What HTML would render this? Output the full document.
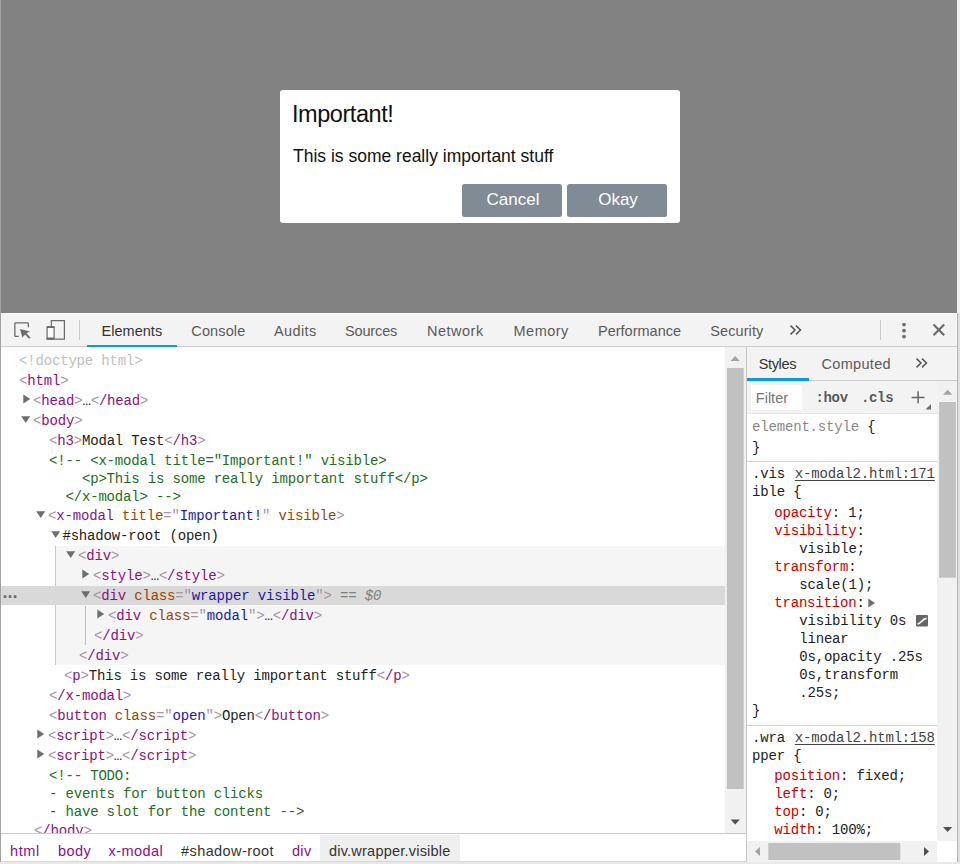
<!DOCTYPE html>
<html lang="en">
<head>
<meta charset="utf-8">
<title>Modal Test</title>
<style>
*{box-sizing:border-box;margin:0;padding:0}
html,body{width:960px;height:864px;overflow:hidden;background:#fff}
body{position:relative;font-family:"Liberation Sans",Arial,sans-serif;color:#222}
.abs{position:absolute}
/* window edges */
#edgeL{left:0;top:0;width:1px;height:864px;background:#a2a2a2}
#edgeR{left:957px;top:0;width:3px;height:864px;background:#f1f1f0}
#edgeR2{left:957px;top:313px;width:3px;height:551px;background:#dfdfdf;border-left:1px solid #b6b6b6}
#edgeB{left:0;top:862px;width:960px;height:2px;background:#e9e9e9}
/* page */
#page{left:1px;top:0;width:956px;height:312.6px;background:#828282}
#modal{left:280px;top:90.4px;width:400px;height:133px;background:#fff;border-radius:3px}
#modal h1{position:absolute;left:12px;top:9.6px;font-size:23.5px;letter-spacing:-0.45px;font-weight:normal;line-height:28px;color:#111;white-space:nowrap}
#modal p{position:absolute;left:13px;top:54.6px;font-size:17.5px;line-height:22px;color:#111;white-space:nowrap}
.btn{position:absolute;top:93.8px;width:100px;height:33px;background:#808b96;border-radius:2.5px;color:#fff;font-size:17px;line-height:31.6px;padding-left:2px;text-align:center}
/* devtools toolbar */
#tb{left:1px;top:313px;width:956px;height:34px;background:#f3f3f3;border-bottom:1px solid #cdcdcd;border-top:1px solid #fafafa}
.ui{font-family:"Liberation Sans",Arial,sans-serif;font-size:14.5px;color:#5a5a5a;white-space:nowrap;line-height:20px}
.tab{position:absolute;top:321px;height:20px}
.sel{color:#333}
.uline{background:#0a99e8;height:2.4px}
/* panes */
#tree{left:1px;top:347px;width:724.3px;height:486px;background:#fff;overflow:hidden}
#sbar1{left:725.3px;top:347px;width:20.7px;height:486px;background:#f1f1f1}
#split{left:746px;top:347px;width:1px;height:515px;background:#c6c6c6}
#crumbs{left:1px;top:833px;width:745px;height:29px;background:#fff;border-top:1px solid #ccc;border-bottom:1px solid #d8d8d8}
#stabs{left:747px;top:347px;width:210px;height:34px;background:#f3f3f3;border-bottom:1px solid #cdcdcd}
#sfilter{left:747px;top:381px;width:190px;height:33px;background:#f3f3f3;border-bottom:1px solid #e6e6e6}
#styles{left:747px;top:414px;width:190px;height:427px;background:#fff;overflow:hidden}
#sbar2{left:937px;top:381px;width:20px;height:460px;background:#f1f1f1}
#hbar{left:747px;top:841px;width:190px;height:21px;background:#f1f1f1}
.mono{font-family:"Liberation Mono","DejaVu Sans Mono",monospace;font-size:14px;letter-spacing:-0.17px;white-space:pre}

/* tree */
#tree{padding-top:3px}
.r{height:20px;line-height:20px;padding-top:1px;position:relative;color:#222}
.r.c3{height:55px;line-height:18px;padding-top:2px}
.i0{padding-left:18px}.i1{padding-left:33px}.i2{padding-left:48px}.i3{padding-left:63px}.i4{padding-left:78px}.i5{padding-left:93px}.i6{padding-left:108px}
.t{color:#881280}.b{color:#a894a6}.an{color:#994500}.av{color:#1a1aa6}.cm{color:#236e25}.dt{color:#c0c0c0}.tx{color:#222}
.tri{position:absolute;top:0;left:0;overflow:visible}
.r.ht{text-indent:-1px}
#band{left:54px;top:199px;width:671px;height:119px;background:#f5f5f5;border-left:1px solid #c9c9c9}
#selrow{left:0;top:239px;width:725px;height:18.5px;background:#d9d9d9}
#guide{left:84px;top:259px;width:1px;height:39px;background:#a9c4ea}

/* styles pane */
.sl{position:absolute;height:18px;line-height:18px;color:#222}
.pn{color:#c80000}
.lnk{color:#444;text-decoration:underline;text-underline-offset:1.5px;margin-left:1.7px}
.sep{position:absolute;left:0;width:191px;height:1px;background:#d4d4d4}
.crumb{position:absolute;top:6.5px;height:20px;line-height:20px;font-size:14.5px;white-space:nowrap;color:#881280}
</style>
</head>
<body>
<div id="page" class="abs"></div>
<div id="modal" class="abs">
  <h1>Important!</h1>
  <p>This is some really important stuff</p>
  <div class="btn" style="left:182px">Cancel</div>
  <div class="btn" style="left:287px">Okay</div>
</div>

<div id="tb" class="abs"></div>
<!-- toolbar icons -->
<svg class="abs" style="left:12px;top:319px" width="22" height="22" viewBox="0 0 22 22" fill="none">
  <path d="M6.7 17.35 H3.55 Q2.85 17.35 2.85 16.65 V4.65 Q2.85 3.95 3.55 3.95 H15.65 Q16.35 3.95 16.35 4.65 V8.3" stroke="#6b6b6b" stroke-width="1.3"/>
  <path d="M8 10 L18 12.4 L14.4 14.3 L18.5 18.4 L17.1 19.7 L13 15.6 L10.4 18.5 Z" fill="#6b6b6b"/>
</svg>
<svg class="abs" style="left:44px;top:318px" width="24" height="24" viewBox="0 0 24 24" fill="none">
  <path d="M7.3 8.2 V2.6 H20.4 V21.1 H10.7" stroke="#6b6b6b" stroke-width="1.2"/>
  <rect x="3.1" y="8.8" width="7" height="12.4" rx="0.8" fill="#fbfbfb" stroke="#6b6b6b" stroke-width="1.2"/>
  <rect x="2.5" y="8.2" width="8.2" height="1.9" rx="0.6" fill="#6b6b6b"/>
  <rect x="2.5" y="19.4" width="8.2" height="2.4" rx="0.6" fill="#6b6b6b"/>
</svg>
<div class="abs" style="left:79px;top:320px;width:1px;height:20px;background:#cacaca"></div>
<div class="abs ui tab sel" style="left:101.5px;letter-spacing:0.03px">Elements</div>
<div class="abs uline" style="left:87px;top:344.6px;width:90px"></div>
<div class="abs ui tab" style="left:191.3px;letter-spacing:0.13px">Console</div>
<div class="abs ui tab" style="left:274px;letter-spacing:0.4px">Audits</div>
<div class="abs ui tab" style="left:345px;letter-spacing:-0.15px">Sources</div>
<div class="abs ui tab" style="left:427px;letter-spacing:0.5px">Network</div>
<div class="abs ui tab" style="left:513.5px;letter-spacing:0.5px">Memory</div>
<div class="abs ui tab" style="left:598px;letter-spacing:0px">Performance</div>
<div class="abs ui tab" style="left:710.3px;letter-spacing:0.08px">Security</div>
<svg class="abs" style="left:788px;top:322px" width="16" height="16" viewBox="0 0 16 16" fill="none" stroke="#555" stroke-width="1.5"><path d="M2.5 3.6 L7 8 L2.5 12.4 M8 3.6 L12.5 8 L8 12.4"/></svg>
<div class="abs" style="left:880px;top:320px;width:1px;height:20px;background:#cacaca"></div>
<svg class="abs" style="left:898px;top:320px" width="12" height="20" viewBox="0 0 12 20" fill="#6e6e6e"><circle cx="6" cy="4.6" r="1.9"/><circle cx="6" cy="10.6" r="1.9"/><circle cx="6" cy="16.6" r="1.9"/></svg>
<svg class="abs" style="left:930px;top:321px" width="18" height="18" viewBox="0 0 18 18" fill="none" stroke="#6a6a6a" stroke-width="2.1"><path d="M3.5 3.6 L14.2 14.2 M14.2 3.6 L3.5 14.2"/></svg>
<div id="tree" class="abs">
<div id="band" class="abs"></div>
<div id="selrow" class="abs"></div>
<div id="guide" class="abs"></div>
<div class="abs" style="left:1.6px;top:235px;height:20px;line-height:20px;font-size:18px;color:#6c6c6c;font-weight:bold">...</div>
<div class="r mono i0"><span class="dt">&lt;!doctype html&gt;</span></div>
<div class="r mono i0"><span class="b">&lt;</span><span class="t">html</span><span class="b">&gt;</span></div>
<div class="r ht mono i1"><svg class="tri" style="left:21.5px;top:4px" width="8" height="10" viewBox="0 0 8 10"><path d="M0.3 0.4 L7.2 4.9 L0.3 9.4 Z" fill="#6e6e6e"/></svg><span class="b">&lt;</span><span class="t">head</span><span class="b">&gt;</span>…<span class="b">&lt;</span><span class="t">/head</span><span class="b">&gt;</span></div>
<div class="r ht mono i1"><svg class="tri" style="left:20px;top:6px" width="10" height="8" viewBox="0 0 10 8"><path d="M0.2 0.2 H9.2 L4.7 6.9 Z" fill="#6e6e6e"/></svg><span class="b">&lt;</span><span class="t">body</span><span class="b">&gt;</span></div>
<div class="r mono i2"><span class="b">&lt;</span><span class="t">h3</span><span class="b">&gt;</span><span class="tx">Modal Test</span><span class="b">&lt;</span><span class="t">/h3</span><span class="b">&gt;</span></div>
<div class="r mono i2 c3"><span class="cm">&lt;!-- &lt;x-modal title="Important!" visible&gt;
    &lt;p&gt;This is some really important stuff&lt;/p&gt;
  &lt;/x-modal&gt; --&gt;</span></div>
<div class="r ht mono i2"><svg class="tri" style="left:35px;top:6px" width="10" height="8" viewBox="0 0 10 8"><path d="M0.2 0.2 H9.2 L4.7 6.9 Z" fill="#6e6e6e"/></svg><span class="b">&lt;</span><span class="t">x-modal</span> <span class="an">title</span><span class="b">=&quot;</span><span class="av">Important!</span><span class="b">&quot;</span> <span class="an">visible</span><span class="b">&gt;</span></div>
<div class="r ht mono i3"><svg class="tri" style="left:49.5px;top:6px" width="10" height="8" viewBox="0 0 10 8"><path d="M0.2 0.2 H9.2 L4.7 6.9 Z" fill="#6e6e6e"/></svg><span class="tx" style="margin-left:-0.6px">#shadow-root (open)</span></div>
<div class="r ht mono i4"><svg class="tri" style="left:65px;top:6px" width="10" height="8" viewBox="0 0 10 8"><path d="M0.2 0.2 H9.2 L4.7 6.9 Z" fill="#6e6e6e"/></svg><span class="b">&lt;</span><span class="t">div</span><span class="b">&gt;</span></div>
<div class="r ht mono i5"><svg class="tri" style="left:81.3px;top:4px" width="8" height="10" viewBox="0 0 8 10"><path d="M0.3 0.4 L7.2 4.9 L0.3 9.4 Z" fill="#6e6e6e"/></svg><span class="b">&lt;</span><span class="t">style</span><span class="b">&gt;</span>…<span class="b">&lt;</span><span class="t">/style</span><span class="b">&gt;</span></div>
<div class="r ht mono i5"><svg class="tri" style="left:80px;top:6px" width="10" height="8" viewBox="0 0 10 8"><path d="M0.2 0.2 H9.2 L4.7 6.9 Z" fill="#6e6e6e"/></svg><span class="b">&lt;</span><span class="t">div</span> <span class="an">class</span><span class="b">=&quot;</span><span class="av">wrapper visible</span><span class="b">&quot;</span><span class="b">&gt;</span><span style="color:#808080;font-style:italic"> == $0</span></div>
<div class="r ht mono i6"><svg class="tri" style="left:96px;top:4px" width="8" height="10" viewBox="0 0 8 10"><path d="M0.3 0.4 L7.2 4.9 L0.3 9.4 Z" fill="#6e6e6e"/></svg><span class="b">&lt;</span><span class="t">div</span> <span class="an">class</span><span class="b">=&quot;</span><span class="av">modal</span><span class="b">&quot;</span><span class="b">&gt;</span>…<span class="b">&lt;</span><span class="t">/div</span><span class="b">&gt;</span></div>
<div class="r mono i5"><span class="b">&lt;</span><span class="t">/div</span><span class="b">&gt;</span></div>
<div class="r mono i4"><span class="b">&lt;</span><span class="t">/div</span><span class="b">&gt;</span></div>
<div class="r mono i3"><span class="b">&lt;</span><span class="t">p</span><span class="b">&gt;</span><span class="tx">This is some really important stuff</span><span class="b">&lt;</span><span class="t">/p</span><span class="b">&gt;</span></div>
<div class="r mono i2"><span class="b">&lt;</span><span class="t">/x-modal</span><span class="b">&gt;</span></div>
<div class="r mono i2"><span class="b">&lt;</span><span class="t">button</span> <span class="an">class</span><span class="b">=&quot;</span><span class="av">open</span><span class="b">&quot;</span><span class="b">&gt;</span><span class="tx">Open</span><span class="b">&lt;</span><span class="t">/button</span><span class="b">&gt;</span></div>
<div class="r ht mono i2"><svg class="tri" style="left:35.8px;top:4px" width="8" height="10" viewBox="0 0 8 10"><path d="M0.3 0.4 L7.2 4.9 L0.3 9.4 Z" fill="#6e6e6e"/></svg><span class="b">&lt;</span><span class="t">script</span><span class="b">&gt;</span>…<span class="b">&lt;</span><span class="t">/script</span><span class="b">&gt;</span></div>
<div class="r ht mono i2"><svg class="tri" style="left:35.8px;top:4px" width="8" height="10" viewBox="0 0 8 10"><path d="M0.3 0.4 L7.2 4.9 L0.3 9.4 Z" fill="#6e6e6e"/></svg><span class="b">&lt;</span><span class="t">script</span><span class="b">&gt;</span>…<span class="b">&lt;</span><span class="t">/script</span><span class="b">&gt;</span></div>
<div class="r mono i2 c3"><span class="cm">&lt;!-- TODO:
- events for button clicks
- have slot for the content --&gt;</span></div>
<div class="r mono i1"><span class="b">&lt;</span><span class="t">/body</span><span class="b">&gt;</span></div>
</div>
<div id="sbar1" class="abs">
<svg class="abs" style="left:0;top:0" width="21" height="486" viewBox="0 0 21 486"><path d="M5.6 14 L10.2 9 L14.8 14 Z" fill="#a3a3a3"/><rect x="1.9" y="21" width="16.8" height="421" fill="#c1c1c1"/><path d="M5.6 472.5 L10.2 477.5 L14.8 472.5 Z" fill="#505050"/></svg>
</div>
<div id="split" class="abs"></div>
<div id="crumbs" class="abs">
<div class="abs" style="left:319px;top:1px;width:140px;height:26px;background:#efefef"></div>
<div class="crumb" style="left:9px;letter-spacing:0.6px">html</div>
<div class="crumb" style="left:57px;letter-spacing:0.45px">body</div>
<div class="crumb" style="left:107.5px;letter-spacing:0.45px">x-modal</div>
<div class="crumb" style="left:180px;letter-spacing:0.42px;color:#333">#shadow-root</div>
<div class="crumb" style="left:291px;letter-spacing:0.3px">div</div>
<div class="crumb" style="left:328px;letter-spacing:0.22px;color:#333">div.wrapper.visible</div>
</div>
<div id="stabs" class="abs">
<div class="abs ui sel" style="left:11.7px;top:7px;letter-spacing:-0.35px">Styles</div>
<div class="abs uline" style="left:0;top:31px;width:62px;height:2.8px"></div>
<div class="abs ui" style="left:74.6px;top:7px;letter-spacing:0.3px">Computed</div>
<svg class="abs" style="left:167px;top:8px" width="16" height="16" viewBox="0 0 16 16" fill="none" stroke="#555" stroke-width="1.5"><path d="M2.5 3.6 L7 8 L2.5 12.4 M8 3.6 L12.5 8 L8 12.4"/></svg>
</div>
<div id="sfilter" class="abs">
<div class="abs" style="left:4px;top:4px;width:51px;height:25px;background:#fff"></div>
<div class="abs ui" style="left:8.8px;top:6.5px;color:#757575">Filter</div>
<div class="abs mono" style="left:68.5px;top:8.3px;line-height:18px;font-weight:bold;color:#5a5a5a;font-size:14px;letter-spacing:-0.35px">:hov</div>
<div class="abs mono" style="left:114px;top:8.3px;line-height:18px;font-weight:bold;color:#5a5a5a;font-size:14px;letter-spacing:-0.35px">.cls</div>
<svg class="abs" style="left:162px;top:8px" width="24" height="24" viewBox="0 0 24 24"><path d="M2.7 8.4 H15.5 M9.1 2.3 V14.2" stroke="#666" stroke-width="1.5" fill="none"/><path d="M22 15 V20.5 H16.5 Z" fill="#6e6e6e"/></svg>
</div>
<div id="styles" class="abs">
<div class="sl mono" style="left:5px;top:4px"><span style="color:#888">element.style</span> {</div>
<div class="sl mono" style="left:5px;top:24.5px">}</div>
<div class="sep" style="top:47px"></div>
<div class="sl mono" style="left:5px;top:51px">.vis <span class="lnk">x-modal2.html:171</span></div>
<div class="sl mono" style="left:5px;top:69px">ible {</div>
<div class="sl mono" style="left:27.2px;top:90px"><span class="pn">opacity</span>: 1;</div>
<div class="sl mono" style="left:27.2px;top:108px"><span class="pn">visibility</span>:</div>
<div class="sl mono" style="left:52.2px;top:126px">visible;</div>
<div class="sl mono" style="left:27.2px;top:144px"><span class="pn">transform</span>:</div>
<div class="sl mono" style="left:52.2px;top:162px">scale(1);</div>
<div class="sl mono" style="left:27.2px;top:180px"><span class="pn">transition</span>:<svg width="8" height="10" viewBox="0 0 8 10" style="margin-left:3px;vertical-align:-1px"><path d="M0.3 0.4 L7 4.9 L0.3 9.4 Z" fill="#6e6e6e"/></svg></div>
<div class="sl mono" style="left:52.2px;top:198px">visibility 0s</div>
<svg class="abs" style="left:169.3px;top:200.5px" width="13" height="13" viewBox="0 0 13 13"><rect width="12" height="11.6" rx="1" fill="#666"/><path d="M1.6 8.8 C5.6 8.8 6 3.4 10.6 3.4" stroke="#fff" stroke-width="1.7" fill="none"/></svg>
<div class="sl mono" style="left:52.2px;top:216px">linear</div>
<div class="sl mono" style="left:52.2px;top:234px">0s,opacity .25s</div>
<div class="sl mono" style="left:52.2px;top:252px">0s,transform</div>
<div class="sl mono" style="left:52.2px;top:270px">.25s;</div>
<div class="sl mono" style="left:5px;top:288px">}</div>
<div class="sep" style="top:311px"></div>
<div class="sl mono" style="left:5px;top:315px">.wra <span class="lnk">x-modal2.html:158</span></div>
<div class="sl mono" style="left:5px;top:333px">pper {</div>
<div class="sl mono" style="left:27.2px;top:353px"><span class="pn">position</span>: fixed;</div>
<div class="sl mono" style="left:27.2px;top:371px"><span class="pn">left</span>: 0;</div>
<div class="sl mono" style="left:27.2px;top:389px"><span class="pn">top</span>: 0;</div>
<div class="sl mono" style="left:27.2px;top:407px"><span class="pn">width</span>: 100%;</div>
</div>
<div id="sbar2" class="abs">
<svg class="abs" style="left:0;top:0" width="20" height="460" viewBox="0 0 20 460"><path d="M6 13.8 L10.6 8.8 L15.2 13.8 Z" fill="#a3a3a3"/><rect x="2.1" y="21" width="16.8" height="175.7" fill="#c1c1c1"/><path d="M6 446 L10.6 451 L15.2 446 Z" fill="#505050"/></svg>
</div>
<div id="hbar" class="abs">
<svg class="abs" style="left:0;top:0" width="191" height="21" viewBox="0 0 191 21"><path d="M13 6 L8 10.5 L13 15 Z" fill="#a3a3a3"/><rect x="21.3" y="2" width="132" height="17" fill="#c1c1c1"/><path d="M177 6 L182 10.5 L177 15 Z" fill="#505050"/></svg>
</div>

<div id="edgeL" class="abs"></div>
<div id="edgeR" class="abs"></div>
<div id="edgeR2" class="abs"></div>
<div id="edgeB" class="abs"></div>
</body>
</html>
